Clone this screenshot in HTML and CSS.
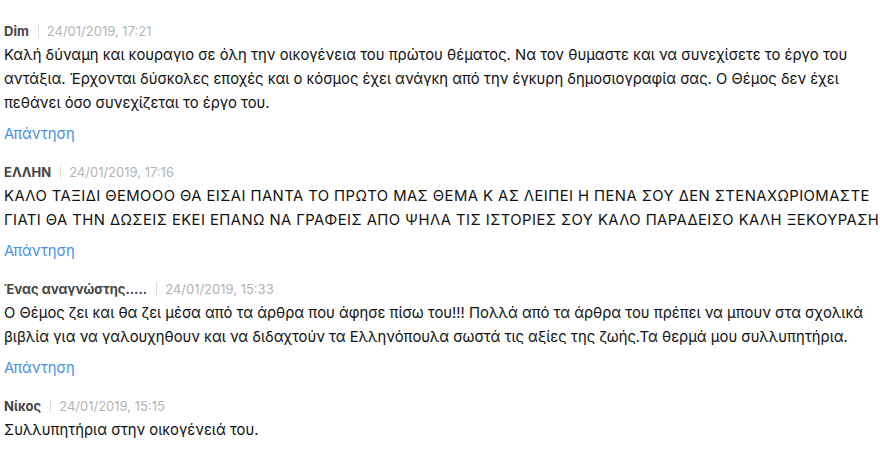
FILE: index.html
```html
<!DOCTYPE html>
<html lang="el">
<head>
<meta charset="utf-8">
<title>Σχόλια</title>
<link rel="stylesheet" href="styles.css">
</head>
<body>
<div class="comments">
  <div class="comment">
    <div class="meta"><span class="author">Dim</span><span class="sep"></span><span class="date">24/01/2019, 17:21</span></div>
    <p class="text">Καλή δύναμη και κουραγιο σε όλη την οικογένεια του πρώτου θέματος. Να τον θυμαστε και να συνεχίσετε το έργο του<br>αντάξια. Έρχονται δύσκολες εποχές και ο κόσμος έχει ανάγκη από την έγκυρη δημοσιογραφία σας. Ο Θέμος δεν έχει<br>πεθάνει όσο συνεχίζεται το έργο του.</p>
    <a class="reply" href="#">Απάντηση</a>
  </div>
  <div class="comment">
    <div class="meta"><span class="author">ΕΛΛΗΝ</span><span class="sep"></span><span class="date">24/01/2019, 17:16</span></div>
    <p class="text caps">ΚΑΛΟ ΤΑΞΙΔΙ ΘΕΜΟΟΟ ΘΑ ΕΙΣΑΙ ΠΑΝΤΑ ΤΟ ΠΡΩΤΟ ΜΑΣ ΘΕΜΑ Κ ΑΣ ΛΕΙΠΕΙ Η ΠΕΝΑ ΣΟΥ ΔΕΝ ΣΤΕΝΑΧΩΡΙΟΜΑΣΤΕ<br>ΓΙΑΤΙ ΘΑ ΤΗΝ ΔΩΣΕΙΣ ΕΚΕΙ ΕΠΑΝΩ ΝΑ ΓΡΑΦΕΙΣ ΑΠΟ ΨΗΛΑ ΤΙΣ ΙΣΤΟΡΙΕΣ ΣΟΥ ΚΑΛΟ ΠΑΡΑΔΕΙΣΟ ΚΑΛΗ ΞΕΚΟΥΡΑΣΗ</p>
    <a class="reply" href="#">Απάντηση</a>
  </div>
  <div class="comment">
    <div class="meta"><span class="author">Ένας αναγνώστης.....</span><span class="sep"></span><span class="date">24/01/2019, 15:33</span></div>
    <p class="text">Ο Θέμος ζει και θα ζει μέσα από τα άρθρα που άφησε πίσω του!!! Πολλά από τα άρθρα του πρέπει να μπουν στα σχολικά<br>βιβλία για να γαλουχηθουν και να διδαχτούν τα Ελληνόπουλα σωστά τις αξίες της ζωής.Τα θερμά μου συλλυπητήρια.</p>
    <a class="reply" href="#">Απάντηση</a>
  </div>
  <div class="comment">
    <div class="meta"><span class="author">Νίκος</span><span class="sep"></span><span class="date">24/01/2019, 15:15</span></div>
    <p class="text">Συλλυπητήρια στην οικογένειά του.</p>
  </div>
</div>
</body>
</html>
```

FILE: styles.css
```css
html, body {
  margin: 0;
  padding: 0;
  background: #ffffff;
}
body {
  font-family: Inter, "Noto Sans", sans-serif;
  color: #111111;
}
.comments {
  padding: 22px 4px 0 4px;
  display: flex;
  flex-direction: column;
  gap: 17px;
}
.comment {
  display: flex;
  flex-direction: column;
  align-items: flex-start;
}
.meta {
  display: flex;
  align-items: center;
  height: 18px;
  font-size: 13px;
}
.author {
  font-weight: 700;
  color: #454545;
}
.sep {
  width: 1px;
  height: 14px;
  background: #dddddd;
  margin: 0 8px 0 9px;
}
.date {
  color: #b4b4b4;
}
.text {
  margin: 3px 0 0;
  font-size: 14.8px;
  line-height: 24px;
  white-space: nowrap;
}
.caps {
  letter-spacing: 0.44px;
}
.reply {
  margin-top: 7px;
  font-size: 14.8px;
  line-height: 24px;
  color: #4a90e2;
  text-decoration: none;
}
```
